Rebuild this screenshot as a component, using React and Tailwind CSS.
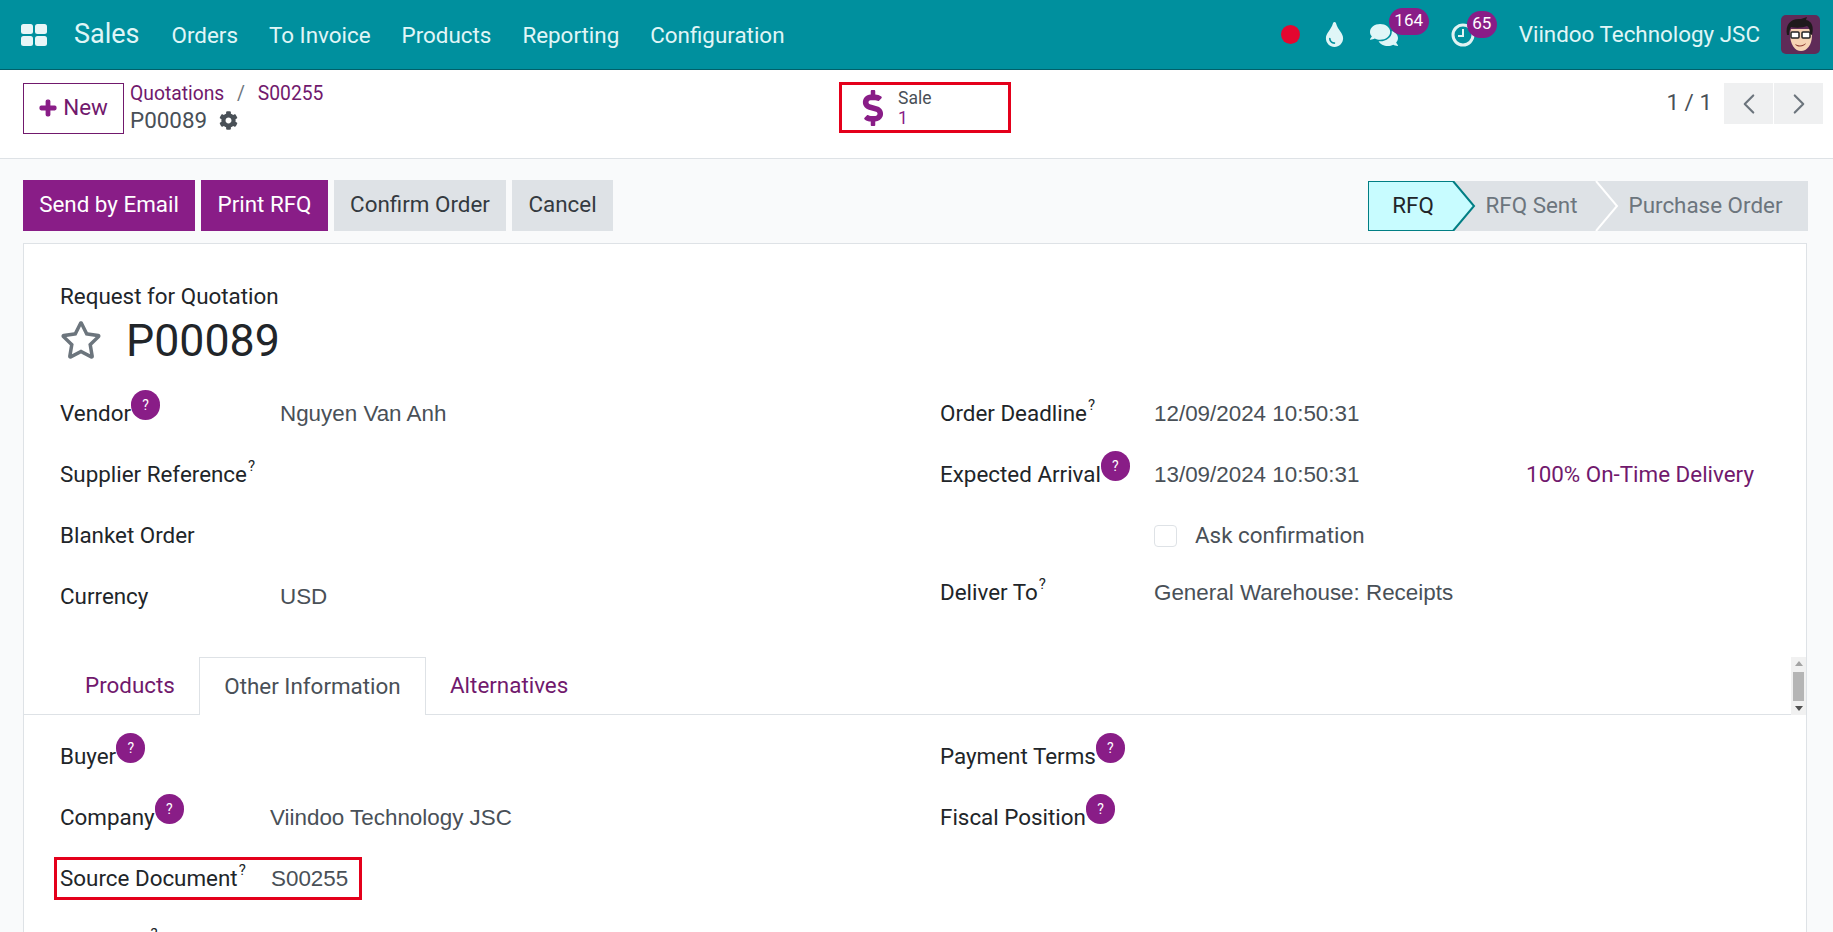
import React from "react"
import { ChevronLeft, ChevronRight } from "lucide-react"
import { FaCog, FaComments, FaDollarSign, FaPlus, FaRegStar, FaTint } from "react-icons/fa"

const value = "font-['Liberation_Sans',sans-serif] text-[#495057]"

const AppsIcon = () => (
  <svg width="26" height="22" viewBox="0 0 26 22" fill="#e9f6f7">
    <rect x="0" y="0" width="12" height="10" rx="2.5" />
    <rect x="14" y="0" width="12" height="10" rx="2.5" />
    <rect x="0" y="12" width="12" height="10" rx="2.5" />
    <rect x="14" y="12" width="12" height="10" rx="2.5" />
  </svg>
)

const ClockIcon = () => (
  <svg width="24" height="24" viewBox="0 0 24 24" fill="none" stroke="#e0f2f3" strokeWidth="3">
    <circle cx="12" cy="12" r="10" />
    <path d="M12 6v7H7" strokeWidth="2" />
  </svg>
)

const Avatar = () => (
  <svg width="39" height="39" viewBox="0 0 39 39">
    <rect width="39" height="39" rx="5" fill="#5f2b58" />
    <path d="M9 18c0 12 5 18 11 18s11-6 11-16l-1-6H10z" fill="#f6d3b4" />
    <path d="M6 20C4 9 10 3 20 4l6-2-1 3c6 1 8 7 6 15l-2-1c0-4-1-7-3-8-5 2-11 2-16 1-1 2-2 4-2 8z" fill="#1f1a1c" />
    <rect x="10" y="17" width="8" height="6" rx="1" fill="#fff" stroke="#222" strokeWidth="1.5" />
    <rect x="21" y="17" width="8" height="6" rx="1" fill="#fff" stroke="#222" strokeWidth="1.5" />
    <path d="M14 29c3 2 8 2 11-1-1 4-9 5-11 1z" fill="#8c3b32" />
  </svg>
)

const Help = () => (
  <span className="inline-flex h-[30px] w-[29px] shrink-0 -translate-y-2 items-center justify-center rounded-full bg-[#891d87] text-[14px] text-white">
    ?
  </span>
)

const Label = ({ text, hint }) => (
  <span className="inline-flex items-center whitespace-nowrap text-[#212529]">
    {text}
    {hint === "bubble" && <Help />}
    {hint === "sup" && <span className="-translate-y-2 pl-px text-[15px]">?</span>}
  </span>
)

const Field = ({ text, hint, children, labelWidth = "w-[220px]" }) => (
  <div className="flex h-[61px] items-center">
    <div className={`${labelWidth} shrink-0`}>
      <Label text={text} hint={hint} />
    </div>
    <div className={value}>{children}</div>
  </div>
)

const Chevron = ({ color, fill, x }) => (
  <svg className="absolute top-0" style={{ left: x }} width="24" height="50" viewBox="0 0 24 50">
    <path d="M1 0L22 25L1 50" fill={fill} stroke={color} strokeWidth="2" />
  </svg>
)

const App = () => {
  return (
    <div className="flex h-[932px] flex-col overflow-hidden bg-[#f9fafb] font-['Roboto',sans-serif] text-[22.4px] text-[#212529]">
      <header className="flex h-[70px] shrink-0 items-center border-b border-[#01606a] bg-[#00909e] text-[#e0f6f7]">
        <div className="ml-[21px] flex w-[53px] shrink-0">
          <AppsIcon />
        </div>
        <span className="text-[27px]">Sales</span>
        <nav className="ml-[32px] flex gap-[31px] pt-[2px]">
          <span>Orders</span>
          <span>To Invoice</span>
          <span>Products</span>
          <span>Reporting</span>
          <span>Configuration</span>
        </nav>
        <div className="ml-auto flex items-center pr-[13px]">
          <span className="h-[19px] w-[19px] rounded-full bg-[#e4062f]" />
          <FaTint className="ml-[22px] text-[25px]" />
          <div className="relative ml-[23px] mr-[53px]">
            <FaComments className="text-[28px]" />
            <span className="absolute -top-[13px] left-[19px] flex h-[27px] w-[40px] items-center justify-center rounded-full bg-[#891d87] text-[17px] text-white">
              164
            </span>
          </div>
          <div className="relative mr-[44px]">
            <ClockIcon />
            <span className="absolute -top-[12px] left-[16px] flex h-[27px] w-[30px] items-center justify-center rounded-full bg-[#891d87] text-[17px] text-white">
              65
            </span>
          </div>
          <span className="mr-[21px]">Viindoo Technology JSC</span>
          <Avatar />
        </div>
      </header>

      <div className="flex h-[89px] shrink-0 border-b border-[#dee2e6] bg-white pt-[13px]">
        <button className="ml-[23px] flex h-[51px] w-[101px] items-center justify-center gap-[6px] border border-[#71196d] pb-[2px] text-[#71196d]">
          <FaPlus className="text-[18px] text-[#891d87]" stroke="currentColor" strokeWidth={40} />
          New
        </button>
        <div className="ml-[6px] w-[709px] shrink-0 leading-[27px]">
          <div className="-mt-[3px] text-[19.3px] text-[#71196d]">
            Quotations <span className="mx-[8px] text-[#6c757d]">/</span> S00255
          </div>
          <div className="flex items-center gap-[12px] text-[#495057]">
            P00089 <FaCog className="text-[19px]" />
          </div>
        </div>
        <div className="-mt-px flex h-[51px] w-[172px] items-center border-[3px] border-[#e4001b] pl-[13px]">
          <FaDollarSign className="text-[36px] text-[#891d87]" />
          <div className="ml-[7px] text-[17.5px] leading-[20px]">
            <div className="text-[#495057]">Sale</div>
            <div className="text-[#891d87]">1</div>
          </div>
        </div>
        <div className="ml-auto flex items-start pr-[10px]">
          <span className="mr-[12px] mt-[3px] text-[#495057]">1 / 1</span>
          <span className="mr-[1px] flex h-[41px] w-[49px] items-center justify-center bg-[#eff0f1] text-[#6c757d]">
            <ChevronLeft size={34} strokeWidth={1.5} />
          </span>
          <span className="flex h-[41px] w-[49px] items-center justify-center bg-[#eff0f1] text-[#6c757d]">
            <ChevronRight size={34} strokeWidth={1.5} />
          </span>
        </div>
      </div>

      <div className="flex shrink-0 items-start justify-between px-[25px] pt-[21px] pl-[23px]">
        <div className="flex gap-[6px]">
          <button className="h-[51px] w-[172px] bg-[#891d87] pb-[2px] text-white">Send by Email</button>
          <button className="h-[51px] w-[127px] bg-[#891d87] pb-[2px] text-white">Print RFQ</button>
          <button className="h-[51px] w-[172px] bg-[#dee2e6] pb-[2px] text-[#343a40]">Confirm Order</button>
          <button className="h-[51px] w-[101px] bg-[#dee2e6] pb-[2px] text-[#343a40]">Cancel</button>
        </div>
        <div className="relative mt-px flex h-[50px] bg-[#dee2e6] text-[#6c757d]">
          <div className="flex w-[85px] items-center justify-center border border-r-0 border-[#017e84] bg-[#c8fcff] pl-[4px] text-[#212529]">
            RFQ
          </div>
          <div className="flex w-[143px] items-center justify-center pl-[14px]">RFQ Sent</div>
          <div className="flex w-[212px] items-center justify-center pl-[7px]">Purchase Order</div>
          <Chevron x={84} color="#017e84" fill="#c8fcff" />
          <Chevron x={227} color="#ffffff" fill="none" />
        </div>
      </div>

      <main className="ml-[23px] mt-[12px] w-[1784px] flex-1 border border-[#dee2e6] bg-white">
        <div className="px-[36px] pt-[39px]">
          <div className="leading-[26px]">Request for Quotation</div>
          <div className="mt-[6px] flex h-[50px] items-center">
            <FaRegStar className="-mt-[1px] w-[42px] text-[44px] text-[#6c757d]" />
            <span className="ml-[24px] mt-[4px] text-[44.7px]">P00089</span>
          </div>
          <div className="mt-[18px] grid grid-cols-[880px_1fr]">
            <div>
              <Field text="Vendor" hint="bubble">Nguyen Van Anh</Field>
              <Field text="Supplier Reference" hint="sup" />
              <Field text="Blanket Order" />
              <Field text="Currency">USD</Field>
            </div>
            <div>
              <Field text="Order Deadline" hint="sup" labelWidth="w-[214px]">12/09/2024 10:50:31</Field>
              <div className="flex h-[61px] items-center">
                <div className="w-[214px] shrink-0">
                  <Label text="Expected Arrival" hint="bubble" />
                </div>
                <span className={value}>13/09/2024 10:50:31</span>
                <span className="ml-auto mr-[16px] text-[#71196d]">100% On-Time Delivery</span>
              </div>
              <div className="flex h-[61px] items-center pl-[214px]">
                <span className="h-[22px] w-[23px] rounded-[4px] border border-[#dee2e6]" />
                <span className="ml-[18px] text-[#495057]">Ask confirmation</span>
              </div>
              <div className="-mt-[4px]">
                <Field text="Deliver To" hint="sup" labelWidth="w-[214px]">General Warehouse: Receipts</Field>
              </div>
            </div>
          </div>
        </div>

        <div className="mt-[30px] flex h-[58px]">
          <div className="flex flex-1 border-b border-[#dee2e6] pl-[37px]">
            <span className="flex w-[138px] items-center pl-[24px] text-[#71196d]">Products</span>
            <span className="-mb-px flex w-[227px] items-center justify-center border border-b-0 border-[#dee2e6] bg-white text-[#495057]">
              Other Information
            </span>
            <span className="flex items-center pl-[24px] text-[#71196d]">Alternatives</span>
          </div>
          <div className="flex w-[15px] flex-col items-center justify-between bg-[#f1f1f1] py-[4px]">
            <span className="h-0 w-0 border-x-[4px] border-b-[5px] border-x-transparent border-b-[#a3a3a3]" />
            <span className="h-[29px] w-[11px] bg-[#b5b5b5]" />
            <span className="h-0 w-0 border-x-[4px] border-t-[5px] border-x-transparent border-t-[#505050]" />
          </div>
        </div>

        <div className="grid grid-cols-[880px_1fr] px-[36px] pt-[11px]">
          <div>
            <Field text="Buyer" hint="bubble" labelWidth="w-[210px]" />
            <Field text="Company" hint="bubble" labelWidth="w-[210px]">Viindoo Technology JSC</Field>
            <div className="-ml-[6px] my-[9px] flex h-[43px] w-[308px] items-center border-[3px] border-[#e4001b] pl-[3px]">
              <div className="w-[211px] shrink-0">
                <Label text="Source Document" hint="sup" />
              </div>
              <span className={value}>S00255</span>
            </div>
            <div className="pt-[3px]">
              <Field text="Incoterm" hint="sup" labelWidth="w-[210px]" />
            </div>
          </div>
          <div>
            <Field text="Payment Terms" hint="bubble" />
            <Field text="Fiscal Position" hint="bubble" />
          </div>
        </div>
      </main>
    </div>
  )
}

export default App
